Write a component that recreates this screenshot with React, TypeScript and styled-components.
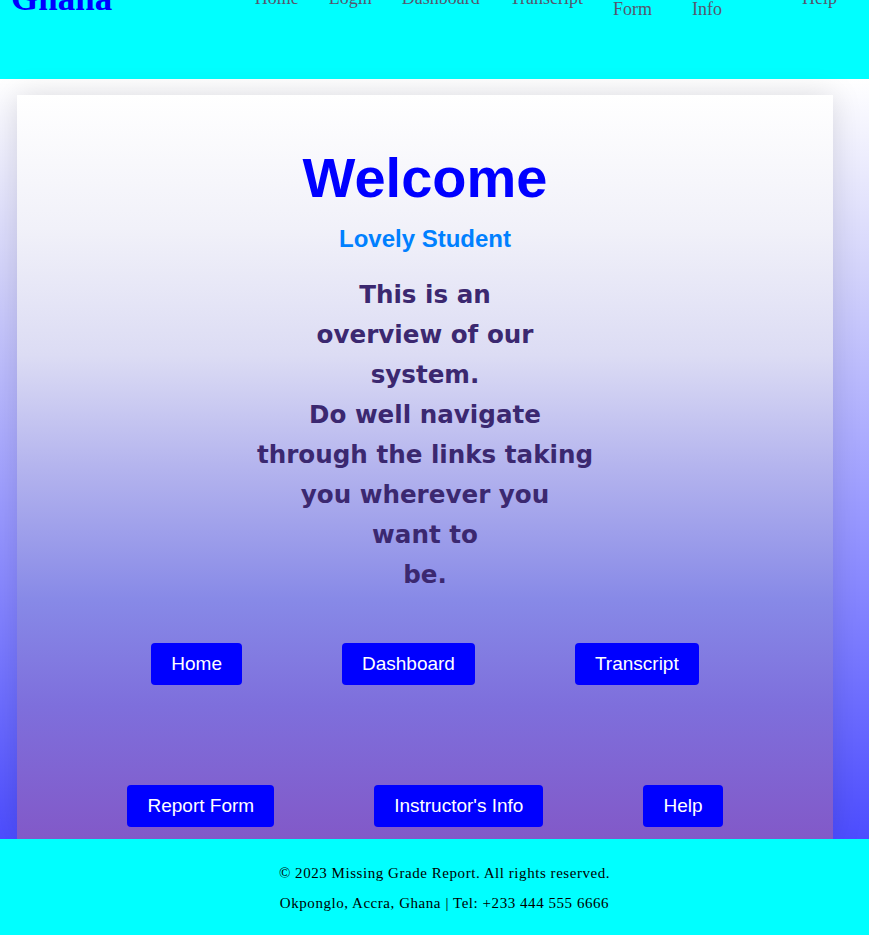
import React from "react";
import styled, { createGlobalStyle } from "styled-components";

const GlobalStyle = createGlobalStyle`
  html, body {
    margin: 0;
    padding: 0;
  }
  body {
    font-family: "Liberation Serif", "Times New Roman", serif;
    background: #ffffff;
  }
  * {
    box-sizing: border-box;
  }
`;

const Page = styled.div`
  display: flex;
  flex-direction: column;
  min-height: 935px;
`;

const Header = styled.header`
  display: flex;
  flex-direction: column;
  height: 79px;
  background-color: #00ffff;
`;

const Bar = styled.div`
  display: flex;
  align-items: center;
  justify-content: space-between;
  height: 60px;
  margin-top: -32px;
  padding: 0 32px 0 11px;
`;

const Logo = styled.div`
  font-family: "Liberation Serif", "Times New Roman", serif;
  font-size: 35px;
  font-weight: bold;
  line-height: 1;
  color: #0000ff;
`;

const Nav = styled.ul`
  display: flex;
  align-items: center;
  gap: 30px;
  margin: 0;
  padding: 0;
  list-style: none;
`;

const NavItem = styled.li<{ $width?: number }>`
  font-size: 18px;
  line-height: 22px;
  color: #55586e;
  white-space: ${({ $width }) => ($width ? "normal" : "nowrap")};
  width: ${({ $width }) => ($width ? `${$width}px` : "auto")};
`;

const Main = styled.main`
  flex: 1;
  display: flex;
  flex-direction: column;
  background: linear-gradient(to bottom, #ffffff 0%, #d4d4fb 25%, #9d9dff 55%, #4d4dff 100%);
`;

const Card = styled.section`
  width: 816px;
  margin: 16px 0 0 17px;
  flex: 1;
  padding: 50px 20px 11px;
  display: flex;
  flex-direction: column;
  align-items: center;
  background: linear-gradient(
    to bottom,
    #ffffff 0%,
    #f1f1f9 18%,
    #dcdcf4 35%,
    #b4b4ee 50%,
    #8789e7 68%,
    #7e6fdc 82%,
    #8259c8 100%
  );
  box-shadow: 0 0 28px rgba(0, 0, 0, 0.13);
`;

const Title = styled.h1`
  margin: 0;
  font-family: "Liberation Sans", Arial, sans-serif;
  font-size: 56px;
  font-weight: bold;
  color: #0000ff;
`;

const Subtitle = styled.h2`
  margin: 15px 0 0;
  font-family: "Liberation Sans", Arial, sans-serif;
  font-size: 24px;
  font-weight: bold;
  color: #0080ff;
`;

const Overview = styled.p`
  margin: 22px 0 0;
  font-family: "DejaVu Sans", Verdana, sans-serif;
  font-size: 24.6px;
  font-weight: bold;
  line-height: 40px;
  text-align: center;
  color: #3b2870;
`;

const ButtonRow = styled.div<{ $top: number }>`
  display: flex;
  justify-content: center;
  gap: 100px;
  margin-top: ${({ $top }) => $top}px;
`;

const NavButton = styled.button`
  height: 42px;
  padding: 0 20px;
  border: none;
  border-radius: 4px;
  background-color: #0000ff;
  color: #ffffff;
  font-family: "Liberation Sans", Arial, sans-serif;
  font-size: 19px;
  cursor: pointer;
`;

const Footer = styled.footer`
  display: flex;
  flex-direction: column;
  align-items: center;
  gap: 13px;
  padding: 26px 0 23px 20px;
  background-color: #00ffff;
`;

const FooterLine = styled.p`
  margin: 0;
  font-size: 15px;
  line-height: 17px;
  letter-spacing: 0.55px;
  color: #000000;
`;

const navLinks: { label: string; width?: number }[] = [
  { label: "Home" },
  { label: "Login" },
  { label: "Dashboard" },
  { label: "Transcript" },
  { label: "Report Form", width: 49 },
  { label: "Instructor's Info", width: 80 },
  { label: "Help" },
];

const overviewLines = [
  "This is an",
  "overview of our",
  "system.",
  "Do well navigate",
  "through the links taking",
  "you wherever you",
  "want to",
  "be.",
];

export default function App() {
  return (
    <Page>
      <GlobalStyle />
      <Header>
        <Bar>
          <Logo>Ghana</Logo>
          <Nav>
            {navLinks.map((link) => (
              <NavItem key={link.label} $width={link.width}>
                {link.label}
              </NavItem>
            ))}
          </Nav>
        </Bar>
      </Header>
      <Main>
        <Card>
          <Title>Welcome</Title>
          <Subtitle>Lovely Student</Subtitle>
          <Overview>
            {overviewLines.map((line, index) => (
              <React.Fragment key={index}>
                {line}
                {index < overviewLines.length - 1 && <br />}
              </React.Fragment>
            ))}
          </Overview>
          <ButtonRow $top={48}>
            <NavButton>Home</NavButton>
            <NavButton>Dashboard</NavButton>
            <NavButton>Transcript</NavButton>
          </ButtonRow>
          <ButtonRow $top={100}>
            <NavButton>Report Form</NavButton>
            <NavButton>Instructor's Info</NavButton>
            <NavButton>Help</NavButton>
          </ButtonRow>
        </Card>
      </Main>
      <Footer>
        <FooterLine>© 2023 Missing Grade Report. All rights reserved.</FooterLine>
        <FooterLine>Okponglo, Accra, Ghana | Tel: +233 444 555 6666</FooterLine>
      </Footer>
    </Page>
  );
}
